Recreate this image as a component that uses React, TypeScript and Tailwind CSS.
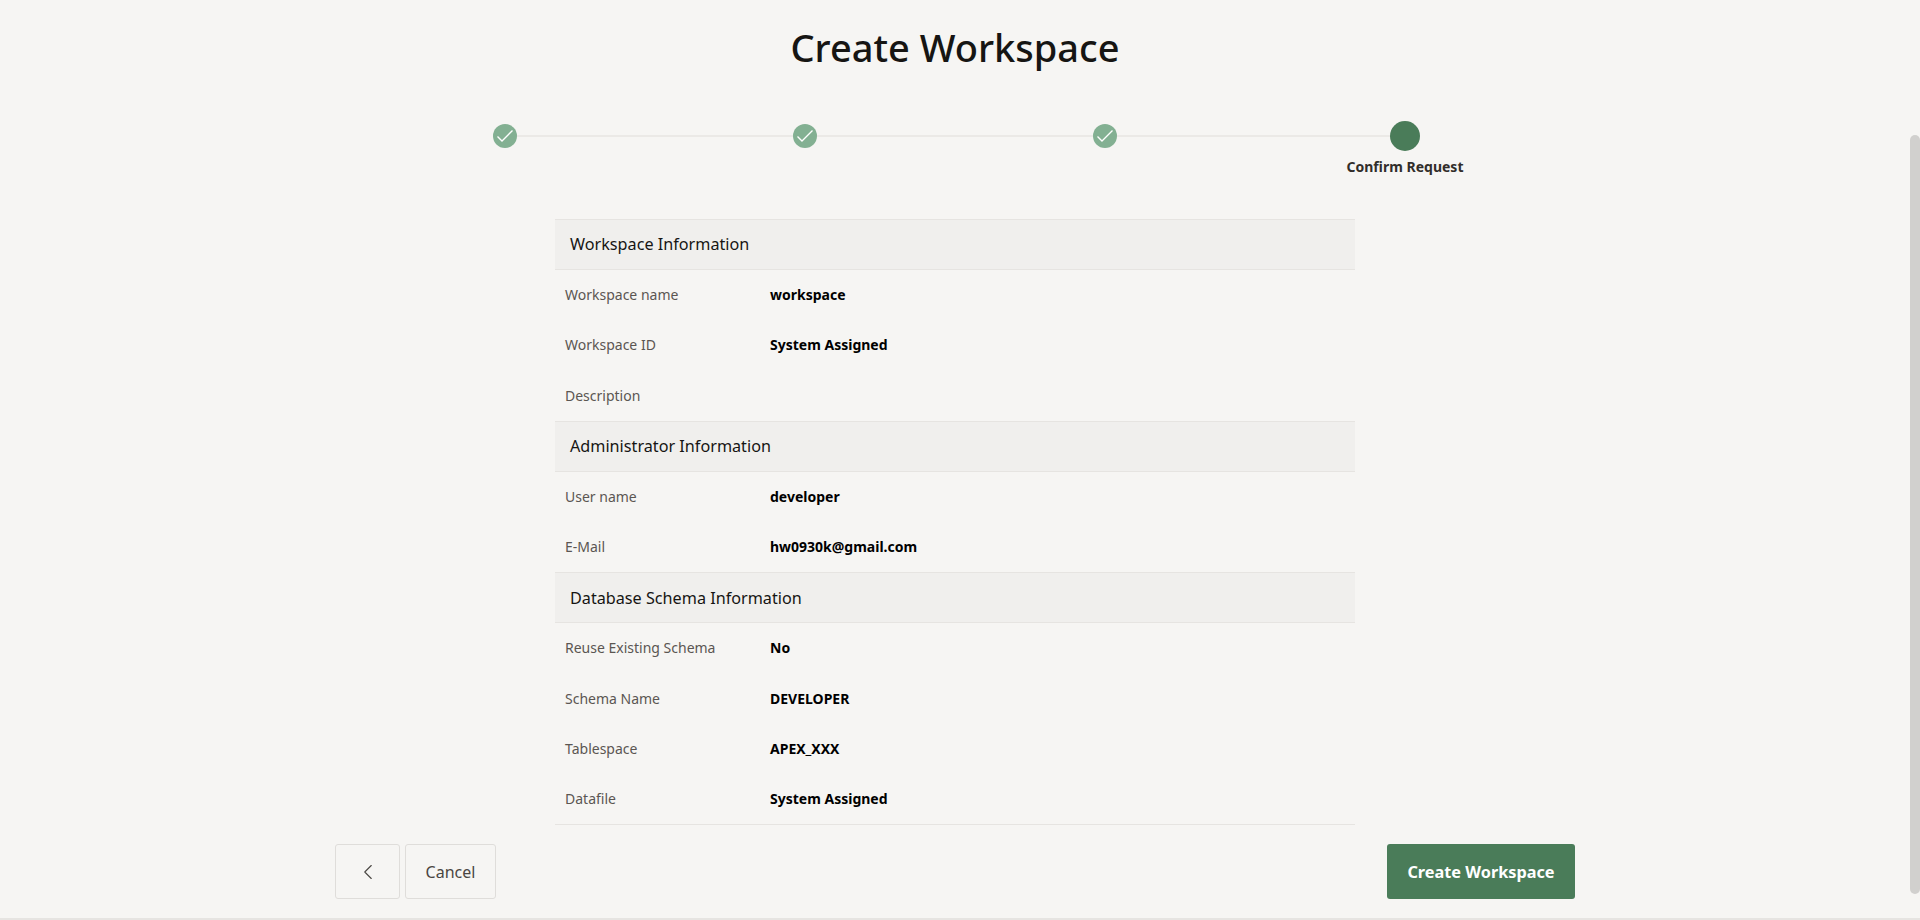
import { ChevronLeft } from 'lucide-react'

const sections = [
  {
    title: 'Workspace Information',
    rows: [
      ['Workspace name', 'workspace'],
      ['Workspace ID', 'System Assigned'],
      ['Description', ''],
    ],
  },
  {
    title: 'Administrator Information',
    rows: [
      ['User name', 'developer'],
      ['E-Mail', 'hw0930k@gmail.com'],
    ],
  },
  {
    title: 'Database Schema Information',
    rows: [
      ['Reuse Existing Schema', 'No'],
      ['Schema Name', 'DEVELOPER'],
      ['Tablespace', 'APEX_XXX'],
      ['Datafile', 'System Assigned'],
    ],
  },
]

function DoneStep() {
  return (
    <div className="z-10 flex h-6 w-6 items-center justify-center rounded-full bg-[#83b092]">
      <svg width="16" height="14" viewBox="0 0 16 14" fill="none" stroke="#ffffff" strokeWidth="1.4">
        <path d="M0.5 7.5 L5 12 L15.5 1.5" />
      </svg>
    </div>
  )
}

function Wizard() {
  return (
    <div className="relative mt-[48px] flex h-[30px] w-[930px] items-center justify-between">
      <div className="absolute left-[15px] right-[15px] top-[14px] h-0.5 bg-[#ebe9e6]" />
      <div className="flex w-[30px] justify-center">
        <DoneStep />
      </div>
      <div className="flex w-[30px] justify-center">
        <DoneStep />
      </div>
      <div className="flex w-[30px] justify-center">
        <DoneStep />
      </div>
      <div className="z-10 h-[30px] w-[30px] rounded-full bg-[#4a7c59]" />
    </div>
  )
}

export default function App() {
  return (
    <div className="flex h-screen overflow-hidden border-b-2 border-[#e6e4e1] bg-[#f6f5f3] font-['Noto_Sans',sans-serif] text-[#161513]">
      <div className="flex min-w-0 flex-1 flex-col items-center">
        <h1 className="mt-[21px] h-[52px] text-[38px] font-medium leading-[52px]">Create Workspace</h1>
        <Wizard />
        <div className="mt-[6px] flex w-[930px] justify-end">
          <div className="-mr-[45px] w-[120px] whitespace-nowrap text-center text-sm font-bold leading-[20px] text-[#312d2a]">
            Confirm Request
          </div>
        </div>
        <div className="mt-[42px] w-[800px] border-b border-[#e6e4e1]">
          {sections.map((section) => (
            <section key={section.title}>
              <h2 className="flex h-[51px] items-center border-y border-[#e6e4e1] bg-[#f0efed] pl-[15px] text-[16.2px] font-normal">
                {section.title}
              </h2>
              {section.rows.map(([label, value]) => (
                <div key={label} className="flex h-[50.25px] items-center pl-[10px]">
                  <div className="w-[205px] text-sm text-[#5b5652]">{label}</div>
                  <div className="text-sm font-bold text-black">{value}</div>
                </div>
              ))}
            </section>
          ))}
        </div>
        <div className="mt-[19px] flex w-[1240px] items-stretch">
          <button className="flex h-[55px] w-[65px] items-center justify-center rounded-[3px] border border-[#dfddda] text-[#4a4642]">
            <ChevronLeft size={26} strokeWidth={1} />
          </button>
          <button className="ml-[5px] h-[55px] w-[91px] rounded-[3px] border border-[#dfddda] text-base text-[#4a4642]">
            Cancel
          </button>
          <button className="ml-auto h-[55px] w-[188px] rounded-[3px] bg-[#4a7c59] text-[16.3px] font-bold text-white">
            Create Workspace
          </button>
        </div>
      </div>
      <div className="w-2.5 shrink-0 pt-[135px]">
        <div className="h-[759px] rounded-t-full rounded-b-full bg-[#d1d0ce]" />
      </div>
    </div>
  )
}
